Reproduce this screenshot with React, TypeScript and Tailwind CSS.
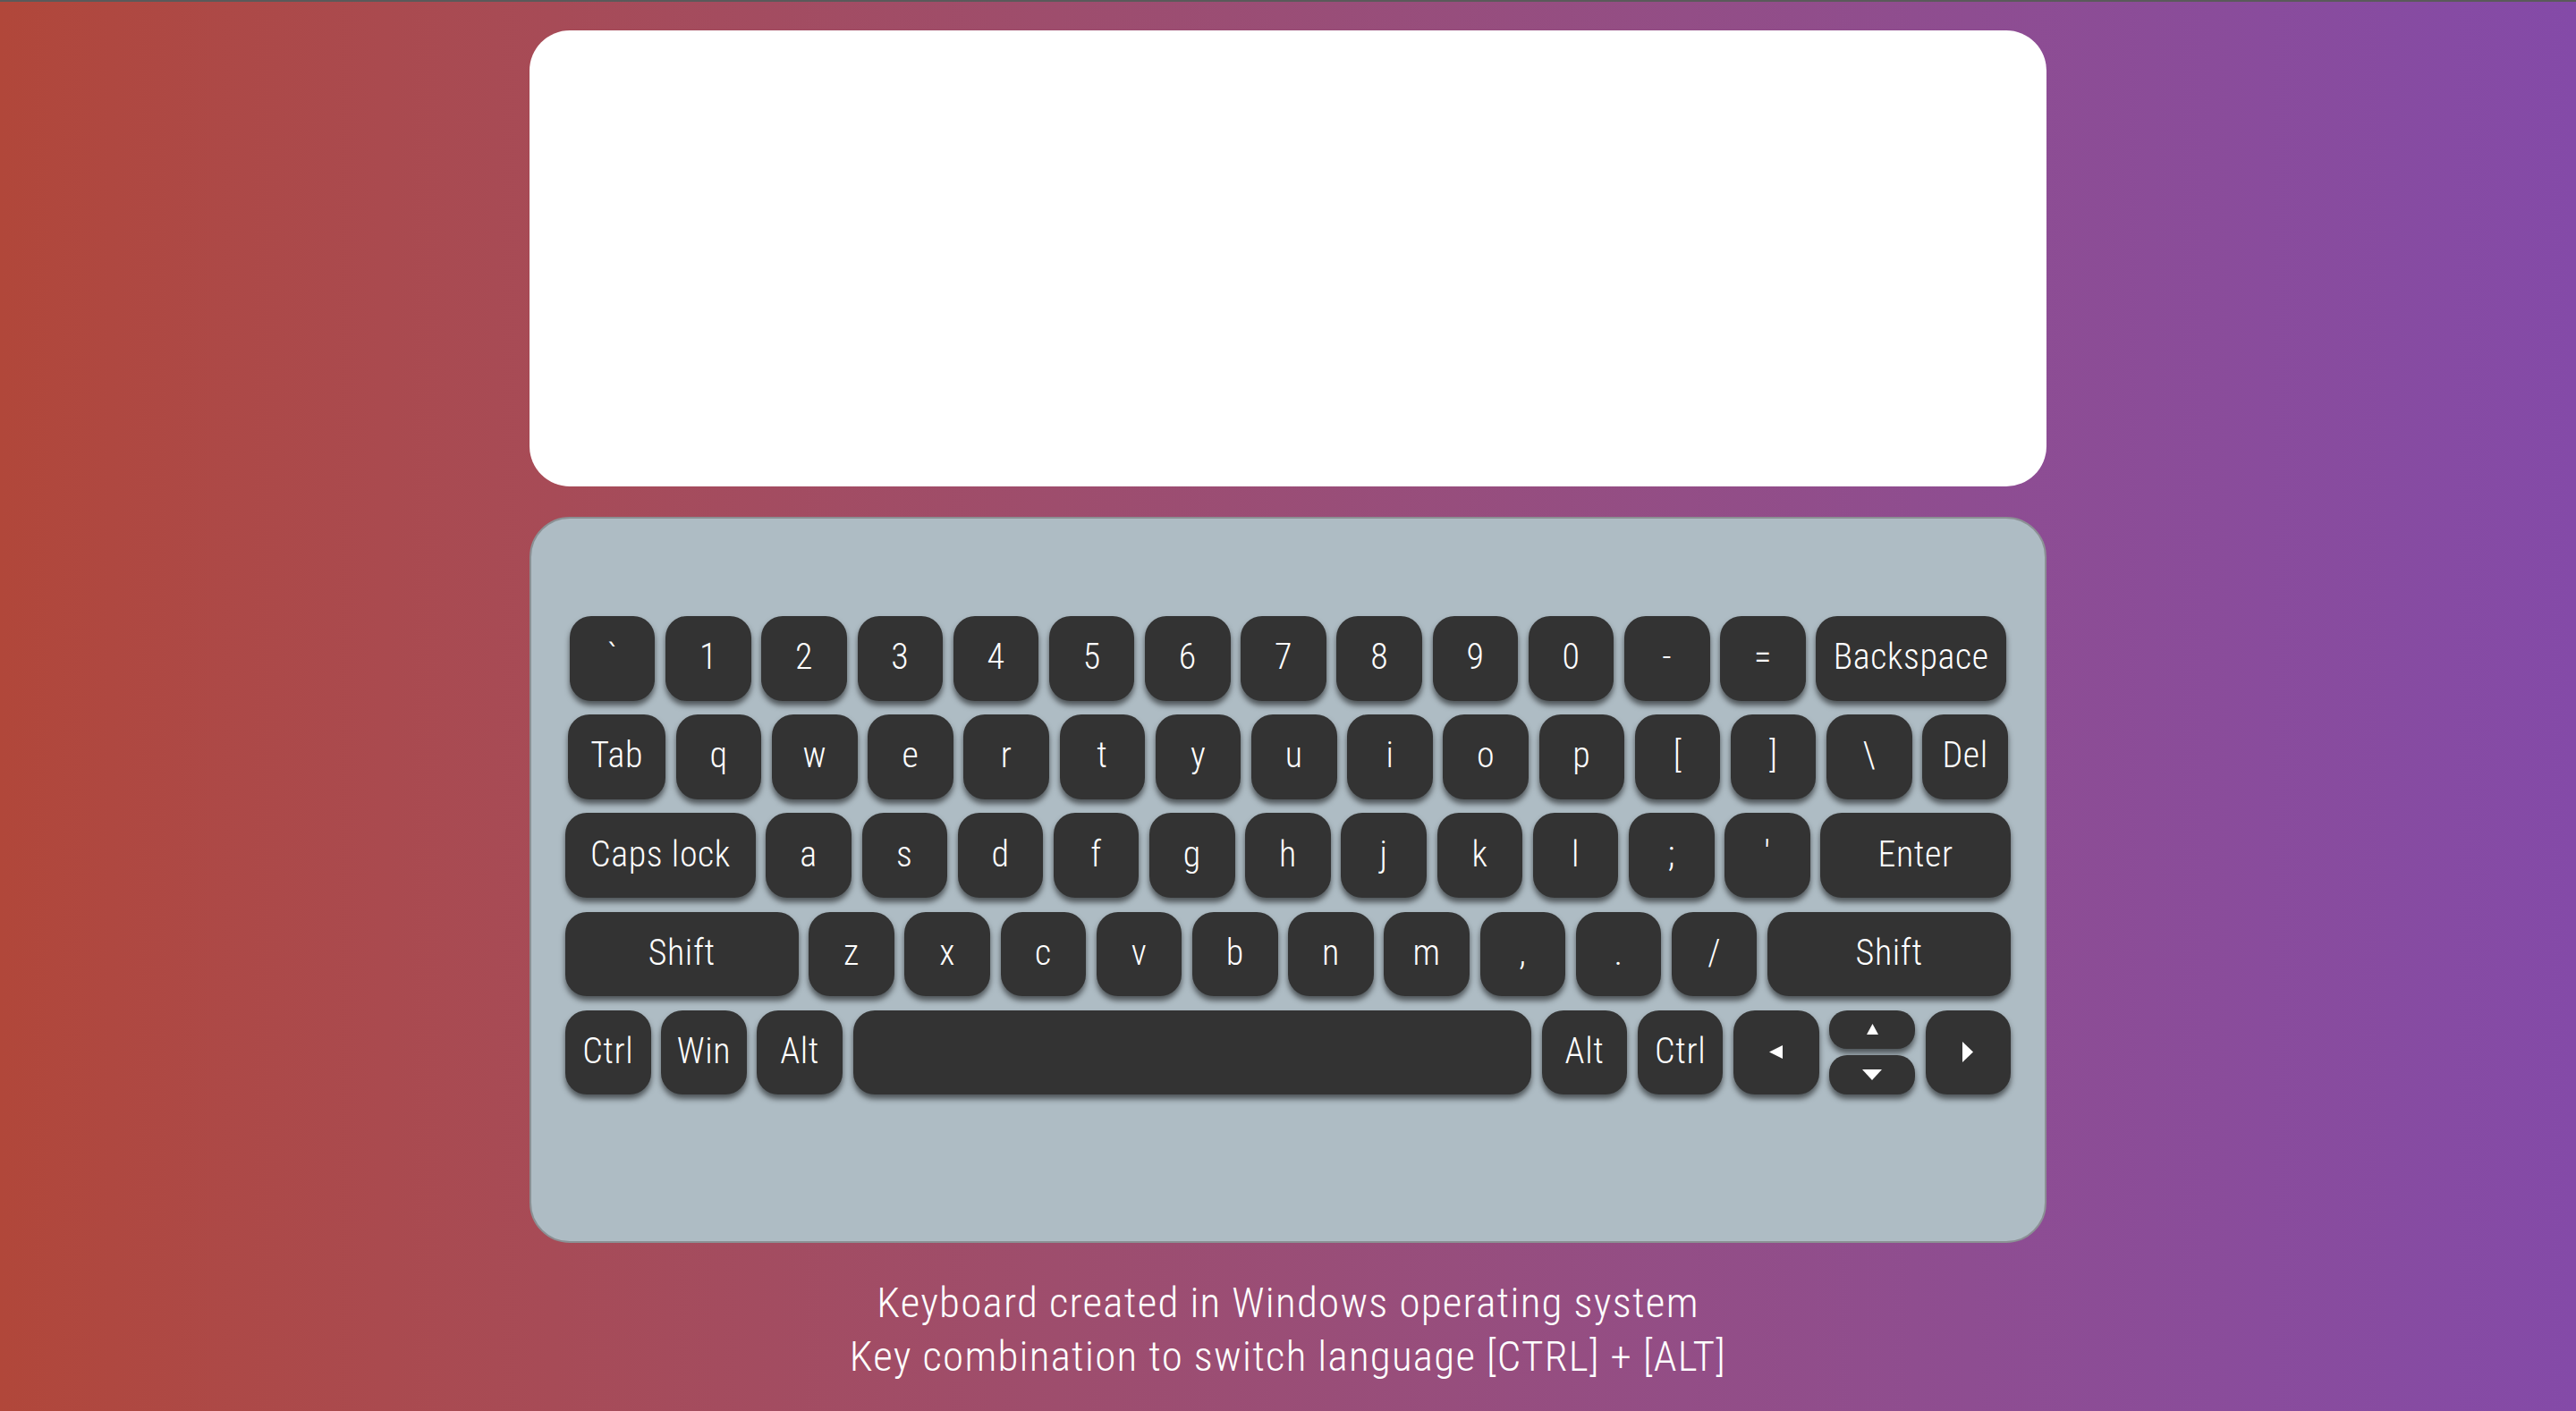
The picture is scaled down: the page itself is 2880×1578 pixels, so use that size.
import React from 'react';

type KeyDef = { label?: React.ReactNode; w?: string };

const U = 'w-[95.5px]';

const rows: KeyDef[][] = [
  [
    { label: '`' }, { label: '1' }, { label: '2' }, { label: '3' }, { label: '4' }, { label: '5' },
    { label: '6' }, { label: '7' }, { label: '8' }, { label: '9' }, { label: '0' }, { label: '-' },
    { label: '=' }, { label: 'Backspace', w: 'w-[212.6px]' },
  ],
  [
    { label: 'Tab', w: 'w-[109px]' }, { label: 'q' }, { label: 'w' }, { label: 'e' }, { label: 'r' },
    { label: 't' }, { label: 'y' }, { label: 'u' }, { label: 'i' }, { label: 'o' }, { label: 'p' },
    { label: '[' }, { label: ']' }, { label: '\\' }, { label: 'Del' },
  ],
  [
    { label: 'Caps lock', w: 'w-[212.4px]' }, { label: 'a' }, { label: 's' }, { label: 'd' }, { label: 'f' },
    { label: 'g' }, { label: 'h' }, { label: 'j' }, { label: 'k' }, { label: 'l' }, { label: ';' },
    { label: "'" }, { label: 'Enter', w: 'w-[212.4px]' },
  ],
  [
    { label: 'Shift', w: 'w-[260.7px]' }, { label: 'z' }, { label: 'x' }, { label: 'c' }, { label: 'v' },
    { label: 'b' }, { label: 'n' }, { label: 'm' }, { label: ',' }, { label: '.' }, { label: '/' },
    { label: 'Shift', w: 'w-[272px]' },
  ],
];

const keyBase =
  "flex h-[94.5px] shrink-0 items-center justify-center rounded-[24px] bg-[#333333] text-[40px] leading-none font-light tracking-[0.6px] text-white font-stretch-condensed shadow-[0_5px_6px_rgba(0,0,0,0.55)]";

const Key: React.FC<KeyDef> = ({ label, w }) => (
  <div className={`${keyBase} ${w || U}`}>
    <span className="pb-[2px]">{label}</span>
  </div>
);

const Tri = ({ dir }: { dir: 'left' | 'right' | 'up' | 'down' }) => {
  if (dir === 'left') return <svg width="15" height="15" viewBox="0 0 15 15"><polygon points="0,7.5 15,0 15,15" fill="#fff" /></svg>;
  if (dir === 'right') return <svg width="12" height="23" viewBox="0 0 12 23"><polygon points="0,0 12,11.5 0,23" fill="#fff" /></svg>;
  if (dir === 'up') return <svg width="13" height="12" viewBox="0 0 13 12"><polygon points="6.5,0 13,12 0,12" fill="#fff" /></svg>;
  return <svg width="22" height="12" viewBox="0 0 22 12"><polygon points="0,0 22,0 11,12" fill="#fff" /></svg>;
};

export default function App() {
  return (
    <div className="flex min-h-screen w-full flex-col items-center bg-linear-to-r from-[#b1473a] to-[#844aa8] font-['Roboto',sans-serif]">
      <div className="h-[2px] w-full bg-[#5a5a5a]" />

      {/* text area */}
      <div className="mt-[32px] h-[510px] w-[1696px] rounded-[45px] bg-white" />

      {/* keyboard */}
      <div className="mt-[34px] flex h-[812px] w-[1696px] flex-col items-center gap-[15.7px] rounded-[45px] border-2 border-[#8b9094] bg-[#aebcc4] pt-[109px]">
        {rows.map((row, i) => (
          <div key={i} className="flex justify-center gap-[11.7px]">
            {row.map((k, j) => (
              <Key key={j} {...k} />
            ))}
          </div>
        ))}
        <div className="flex justify-center gap-[11.7px]">
          <Key label="Ctrl" />
          <Key label="Win" />
          <Key label="Alt" />
          <Key label="" w="w-[758.5px]" />
          <Key label="Alt" />
          <Key label="Ctrl" />
          <Key label={<Tri dir="left" />} />
          <div className="flex h-[94.5px] w-[95.5px] flex-col justify-between">
            <div className="flex h-[43px] items-center justify-center rounded-[20px] bg-[#333333] shadow-[0_5px_6px_rgba(0,0,0,0.55)]">
              <Tri dir="up" />
            </div>
            <div className="flex h-[44px] items-center justify-center rounded-[20px] bg-[#333333] shadow-[0_5px_6px_rgba(0,0,0,0.55)]">
              <Tri dir="down" />
            </div>
          </div>
          <Key label={<Tri dir="right" />} />
        </div>
      </div>

      <div className="mt-[37px] text-center text-[47px] leading-[60px] font-light tracking-[1.25px] text-white font-stretch-condensed">
        <p>Keyboard created in Windows operating system</p>
        <p>Key combination to switch language [CTRL] + [ALT]</p>
      </div>
    </div>
  );
}
